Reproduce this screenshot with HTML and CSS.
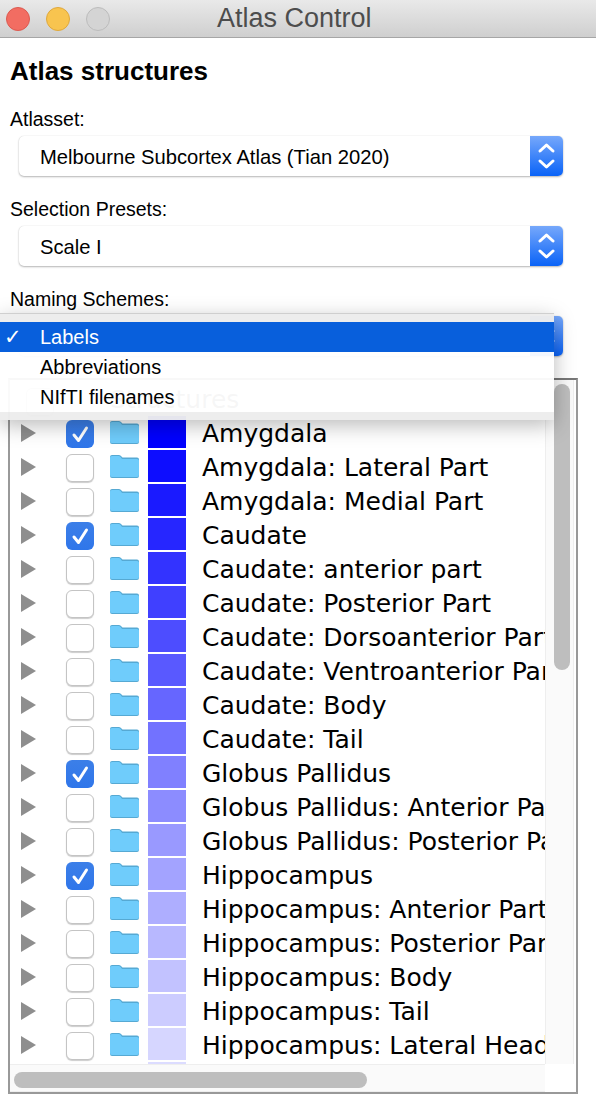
FILE: index.html

```html
<!DOCTYPE html>
<html lang="en">
<head>
    <meta charset="UTF-8">
    <title>Atlas Control</title>
    <link rel="stylesheet" href="styles.css">
</head>
<body>
    <svg class="defs" width="0" height="0">
        <symbol id="folder" viewBox="0 0 30 24">
            <path d="M1 3 Q1 1 3 1 H10 Q11.500 1 12.500 2.500 L13.500 3.500 H28 Q30 3.500 30 5.500 V21.500 Q30 24 28 24 H3 Q1 24 1 21.500 Z" fill="#56a9d3"/>
            <path d="M1 3.500 Q1 2 3 2 H10 Q11 2 12 3.500 L13 5 H28 Q30 5 30 6.500 V21 Q30 23 28 23 H3 Q1 23 1 21 Z" fill="#6fccfb"/>
        </symbol>
        <symbol id="check" viewBox="0 0 28 28">
            <path d="M8 15 L12.500 20.500 L20.500 8" fill="none" stroke="#fff" stroke-width="3" stroke-linecap="round" stroke-linejoin="round"/>
        </symbol>
        <symbol id="stepper" viewBox="0 0 33 40">
            <path d="M10 15 L16.500 9 L23 15 M10 25 L16.500 31 L23 25" fill="none" stroke="#fff" stroke-width="3" stroke-linecap="round" stroke-linejoin="round"/>
        </symbol>
    </svg>

    <div class="titlebar">
        <span class="light red"></span>
        <span class="light yellow"></span>
        <span class="light grey"></span>
        <span class="title">Atlas Control</span>
    </div>

    <div class="panel">
        <h1>Atlas structures</h1>

        <label>Atlasset:</label>
        <div class="select">
            <span>Melbourne Subcortex Atlas (Tian 2020)</span>
            <div class="stepper"><svg><use href="#stepper"/></svg></div>
        </div>

        <label>Selection Presets:</label>
        <div class="select">
            <span>Scale I</span>
            <div class="stepper"><svg><use href="#stepper"/></svg></div>
        </div>

        <label>Naming Schemes:</label>
        <div class="select last">
            <span></span>
            <div class="stepper"><svg><use href="#stepper"/></svg></div>
        </div>

        <div class="tree">
            <div class="tree-top">
                <div class="rows">
                    <div class="row header">
                        <span class="box"></span>
                        <span class="name">Structures</span>
                    </div>
                    <div class="row"><span class="arrow"></span><span class="box on"><svg><use href="#check"/></svg></span><svg class="folder"><use href="#folder"/></svg><span class="swatch" style="background:#0000ff"></span><span class="name">Amygdala</span></div>
                    <div class="row"><span class="arrow"></span><span class="box"></span><svg class="folder"><use href="#folder"/></svg><span class="swatch" style="background:#0d0dff"></span><span class="name">Amygdala: Lateral Part</span></div>
                    <div class="row"><span class="arrow"></span><span class="box"></span><svg class="folder"><use href="#folder"/></svg><span class="swatch" style="background:#1a1aff"></span><span class="name">Amygdala: Medial Part</span></div>
                    <div class="row"><span class="arrow"></span><span class="box on"><svg><use href="#check"/></svg></span><svg class="folder"><use href="#folder"/></svg><span class="swatch" style="background:#2626ff"></span><span class="name">Caudate</span></div>
                    <div class="row"><span class="arrow"></span><span class="box"></span><svg class="folder"><use href="#folder"/></svg><span class="swatch" style="background:#3333ff"></span><span class="name">Caudate: anterior part</span></div>
                    <div class="row"><span class="arrow"></span><span class="box"></span><svg class="folder"><use href="#folder"/></svg><span class="swatch" style="background:#4040ff"></span><span class="name">Caudate: Posterior Part</span></div>
                    <div class="row"><span class="arrow"></span><span class="box"></span><svg class="folder"><use href="#folder"/></svg><span class="swatch" style="background:#4d4dff"></span><span class="name">Caudate: Dorsoanterior Part</span></div>
                    <div class="row"><span class="arrow"></span><span class="box"></span><svg class="folder"><use href="#folder"/></svg><span class="swatch" style="background:#5959ff"></span><span class="name">Caudate: Ventroanterior Part</span></div>
                    <div class="row"><span class="arrow"></span><span class="box"></span><svg class="folder"><use href="#folder"/></svg><span class="swatch" style="background:#6666ff"></span><span class="name">Caudate: Body</span></div>
                    <div class="row"><span class="arrow"></span><span class="box"></span><svg class="folder"><use href="#folder"/></svg><span class="swatch" style="background:#7272ff"></span><span class="name">Caudate: Tail</span></div>
                    <div class="row"><span class="arrow"></span><span class="box on"><svg><use href="#check"/></svg></span><svg class="folder"><use href="#folder"/></svg><span class="swatch" style="background:#8080ff"></span><span class="name">Globus Pallidus</span></div>
                    <div class="row"><span class="arrow"></span><span class="box"></span><svg class="folder"><use href="#folder"/></svg><span class="swatch" style="background:#8c8cff"></span><span class="name">Globus Pallidus: Anterior Part</span></div>
                    <div class="row"><span class="arrow"></span><span class="box"></span><svg class="folder"><use href="#folder"/></svg><span class="swatch" style="background:#9999ff"></span><span class="name">Globus Pallidus: Posterior Part</span></div>
                    <div class="row"><span class="arrow"></span><span class="box on"><svg><use href="#check"/></svg></span><svg class="folder"><use href="#folder"/></svg><span class="swatch" style="background:#a3a3ff"></span><span class="name">Hippocampus</span></div>
                    <div class="row"><span class="arrow"></span><span class="box"></span><svg class="folder"><use href="#folder"/></svg><span class="swatch" style="background:#aeaeff"></span><span class="name">Hippocampus: Anterior Part</span></div>
                    <div class="row"><span class="arrow"></span><span class="box"></span><svg class="folder"><use href="#folder"/></svg><span class="swatch" style="background:#b8b8ff"></span><span class="name">Hippocampus: Posterior Part</span></div>
                    <div class="row"><span class="arrow"></span><span class="box"></span><svg class="folder"><use href="#folder"/></svg><span class="swatch" style="background:#c2c2ff"></span><span class="name">Hippocampus: Body</span></div>
                    <div class="row"><span class="arrow"></span><span class="box"></span><svg class="folder"><use href="#folder"/></svg><span class="swatch" style="background:#ccccff"></span><span class="name">Hippocampus: Tail</span></div>
                    <div class="row"><span class="arrow"></span><span class="box"></span><svg class="folder"><use href="#folder"/></svg><span class="swatch" style="background:#d6d6ff"></span><span class="name">Hippocampus: Lateral Head</span></div>
                    <div class="row"><span class="arrow none"></span><span class="box none"></span><span class="folder"></span><span class="swatch" style="background:#dcdcff"></span></div>
                </div>
                <div class="vtrack"><div class="vthumb"></div></div>
            </div>
            <div class="hbar">
                <div class="htrack"><div class="hthumb"></div></div>
            </div>
        </div>

        <!-- popup del naming scheme, va encima de todo -->
        <div class="menu">
            <div class="item active"><span class="tick">✓</span>Labels</div>
            <div class="item">Abbreviations</div>
            <div class="item">NIfTI filenames</div>
        </div>
    </div>
</body>
</html>
```

FILE: styles.css

```css
html, body {
    margin: 0;
    padding: 0;
    width: 596px;
    height: 1104px;
    overflow: hidden;
    background-color: white;
    font-family: "Liberation Sans", Arial, sans-serif;
    color: black;
}

.defs {
    position: absolute;
}

.titlebar {
    display: flex;
    align-items: center;
    height: 37px;
    padding-left: 6px;
    gap: 16px;
    background: linear-gradient(#e9e9e9, #cfcfcf);
    border-bottom: 1px solid #a6a6a6;
}

.light {
    width: 24px;
    height: 24px;
    border-radius: 50%;
    box-sizing: border-box;
}

.red {
    background: #f26d62;
    border: 1px solid #dc5a50;
}

.yellow {
    background: #f8c44f;
    border: 1px solid #dfa83c;
}

.grey {
    background: #d4d4d4;
    border: 1px solid #bcbcbc;
}

.title {
    margin-left: 91px;
    font-size: 27px;
    color: #4d4d4d;
}

.panel {
    position: relative;
    padding: 0 0 0 8px;
}

h1 {
    margin: 0;
    padding: 19px 0 0 2px;
    height: 53px;
    font-size: 26px;
    line-height: 29px;
    font-weight: bold;
}

label {
    display: block;
    height: 26px;
    padding-left: 2px;
    font-size: 19.5px;
    line-height: 18px;
}

.select {
    display: flex;
    justify-content: space-between;
    align-items: center;
    width: 544px;
    height: 40px;
    margin: 0 0 24px 11px;
    border-radius: 5px;
    background: white;
    box-shadow: 0 1px 2px #b5b5b5, 0 0 1px #cfcfcf;
    font-size: 20.2px;
}

.select > span {
    padding-left: 21px;
    padding-top: 2px;
}

.select.last {
    margin-bottom: 22px;
}

.stepper {
    width: 33px;
    height: 40px;
    border-radius: 0 5px 5px 0;
    background: linear-gradient(#76a8fb, #0a63f7);
}

.stepper svg {
    display: block;
    width: 33px;
    height: 40px;
}

.tree {
    width: 566px;
    height: 712px;
    border: 2px solid #999;
    border-top-color: #777;
}

.tree-top {
    display: flex;
    height: 684px;
}

.rows {
    width: 535px;
    overflow: hidden;
    font-family: "DejaVu Sans", Verdana, sans-serif;
    font-size: 25px;
}

.row {
    display: flex;
    align-items: flex-start;
    height: 34px;
    white-space: nowrap;
}

.row.header {
    height: 36px;
    padding: 0 0 0 16px;
    color: #555;
}

.arrow {
    flex: none;
    width: 0;
    height: 0;
    margin: 8px 30px 0 11px;
    border-left: 15px solid #8e8e8e;
    border-top: 9px solid transparent;
    border-bottom: 9px solid transparent;
}

.arrow.none {
    border-color: transparent;
}

.box {
    flex: none;
    width: 28px;
    height: 28px;
    margin: 4px 15px 0 0;
    box-sizing: border-box;
    border: 1px solid #c4c4c4;
    border-radius: 6px;
    background: white;
    box-shadow: 0 1px 1px #ccc;
}

.header .box {
    margin: 8px 0 0 0;
}

.box.on {
    border: none;
    background: linear-gradient(#3c7fe8, #2f76ea);
    box-shadow: none;
}

.box.none {
    visibility: hidden;
}

.box svg {
    display: block;
    width: 28px;
    height: 28px;
}

.folder {
    flex: none;
    width: 30px;
    height: 24px;
    margin: 4px 9px 0 0;
}

.swatch {
    flex: none;
    width: 38px;
    height: 32px;
}

.name {
    margin-left: 16px;
    line-height: 35px;
}

.header .name {
    margin-left: 56px;
    line-height: 40px;
}

.vtrack {
    width: 29px;
    padding: 4px 5px 0 8px;
    box-sizing: border-box;
    background: #fafafa;
    border-left: 1px solid #eee;
    border-right: 1px solid #eee;
}

.vthumb {
    width: 16px;
    height: 286px;
    border-radius: 8px;
    background: #bebebe;
}

.hbar {
    display: flex;
}

.htrack {
    width: 535px;
    height: 28px;
    padding: 7px 0 0 4px;
    box-sizing: border-box;
    background: #fafafa;
    border-top: 1px solid #eee;
    border-bottom: 1px solid #eee;
}

.hthumb {
    width: 353px;
    height: 16px;
    border-radius: 8px;
    background: #bebebe;
}

.menu {
    position: absolute;
    left: 0;
    top: 276px;
    width: 554px;
    height: 106px;
    box-sizing: border-box;
    border-top: 8px solid rgba(236, 236, 236, 0.97);
    border-bottom: 8px solid rgba(236, 236, 236, 0.97);
    box-shadow: 0 -1px 0 #cfcfcf, 0 5px 20px rgba(0, 0, 0, 0.28);
    font-size: 20px;
}

.item {
    position: relative;
    height: 30px;
    padding-left: 40px;
    line-height: 30px;
    background: rgba(255, 255, 255, 0.95);
}

.item.active {
    background: #085fdc;
    color: white;
}

.tick {
    position: absolute;
    left: 4px;
    font-family: "DejaVu Sans", sans-serif;
    font-size: 21px;
    font-weight: bold;
}
```
